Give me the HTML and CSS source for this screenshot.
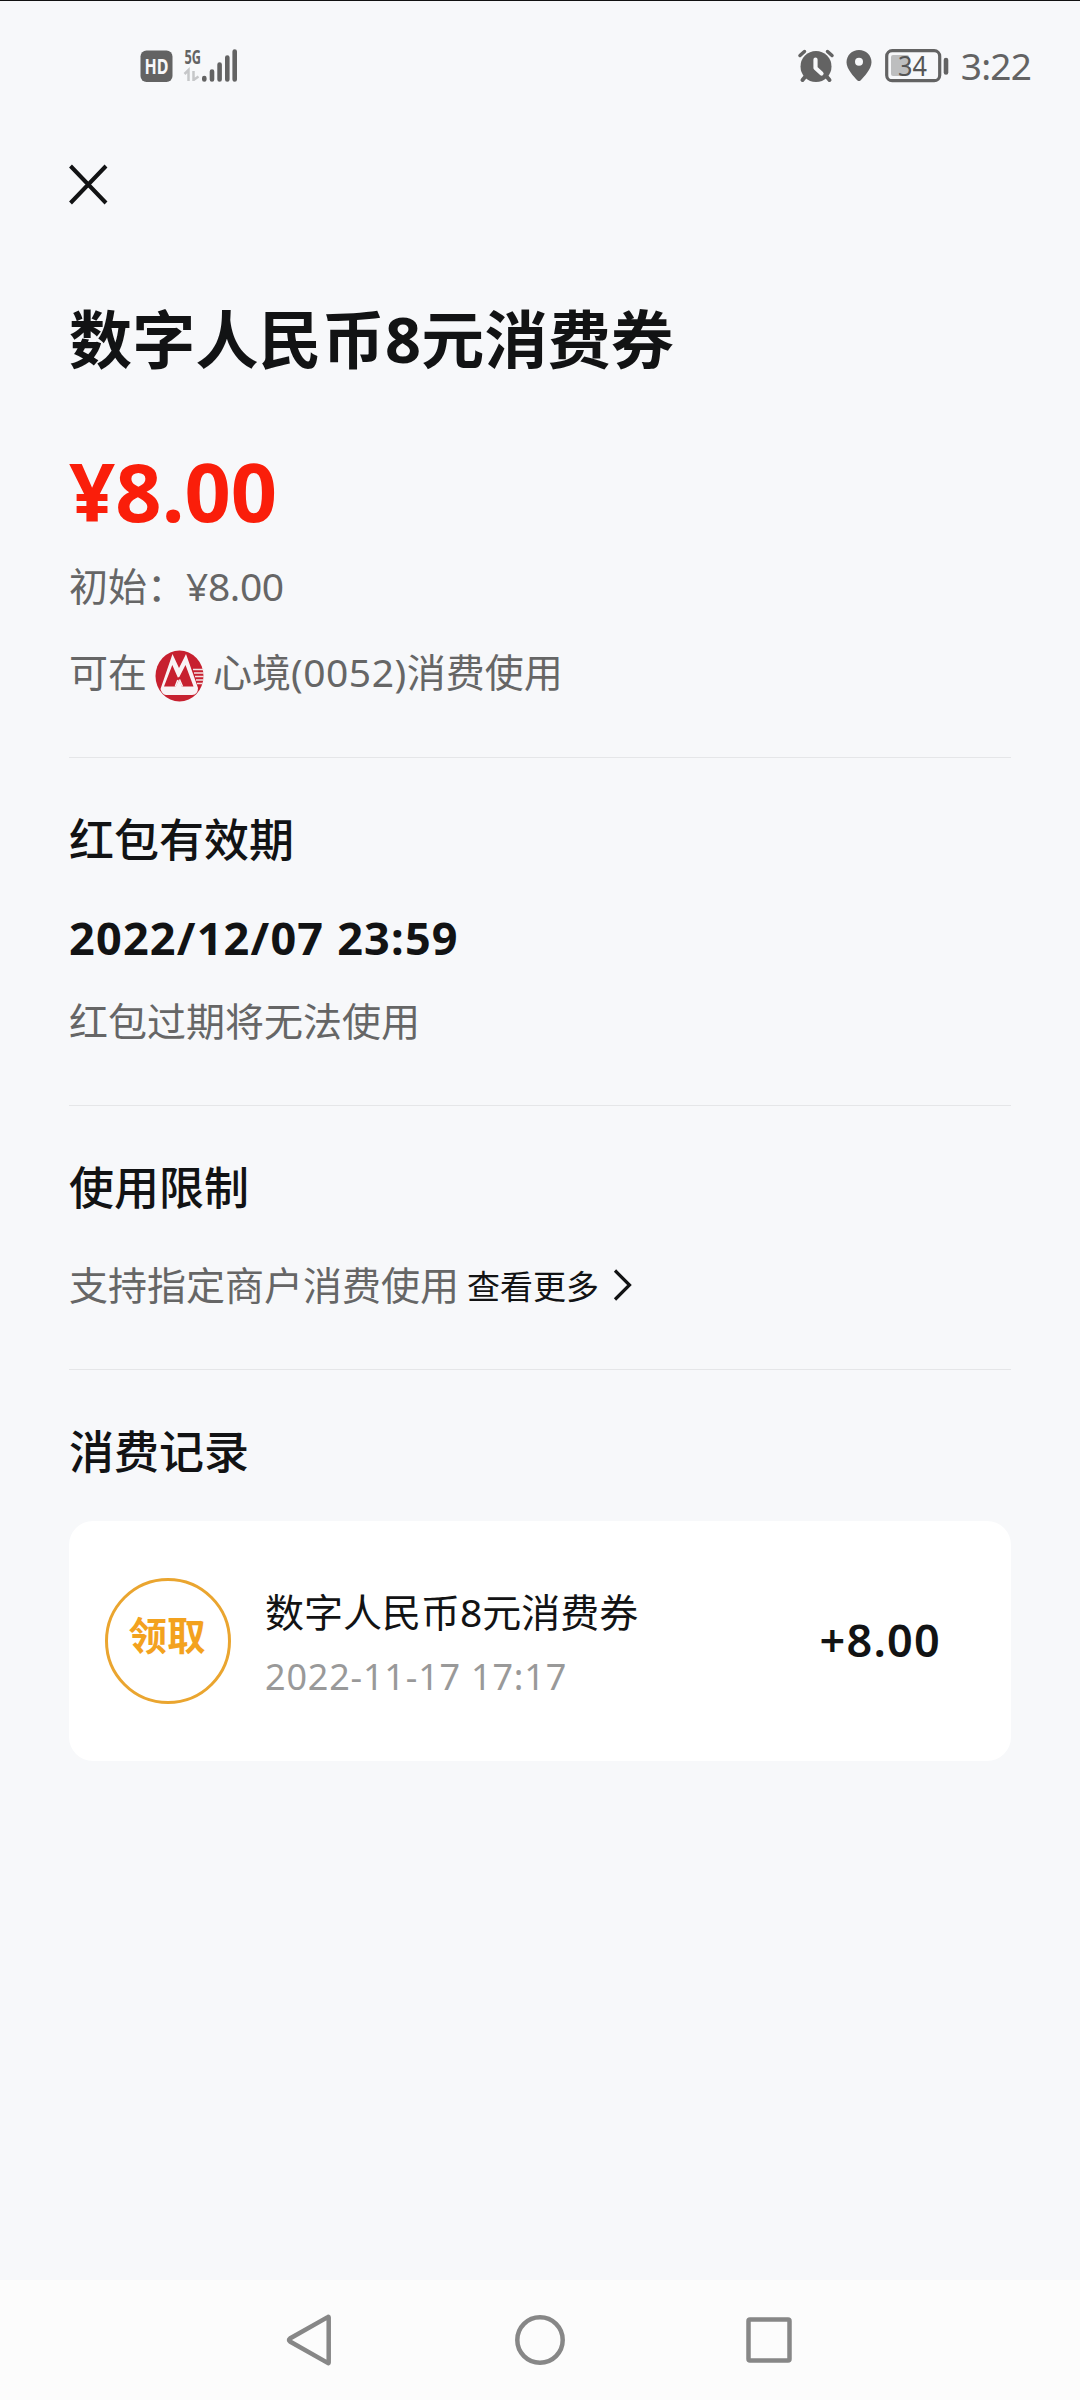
FILE: index.html
```html
<!DOCTYPE html>
<html lang="zh-CN">
<head>
<meta charset="utf-8">
<title>数字人民币8元消费券</title>
<link rel="stylesheet" href="styles.css">
</head>
<body>
<div class="screen">
  <header class="status">
    <svg class="status-left" width="100" height="40" viewBox="0 0 100 40">
      <rect x="0.5" y="4.5" width="32" height="31.5" rx="6" fill="#636363"/>
      <text class="hd" x="16.5" y="28" text-anchor="middle" textLength="24" lengthAdjust="spacingAndGlyphs">HD</text>
      <text class="net" x="44.5" y="17.5" textLength="16.5" lengthAdjust="spacingAndGlyphs">5G</text>
      <path d="M44.500 28l4-4v11M53.500 25v10M53.500 34l5-3.500" fill="none" stroke="#c6c7c9" stroke-width="2.500"/>
      <g stroke="#636363" stroke-width="4.600" stroke-linecap="round">
        <path d="M64.300 32v1.500M72 25.500v8M79.600 18.500v15M87.300 11.500v22M94.700 5.500v28"/>
      </g>
    </svg>
    <div class="status-right">
      <svg width="36" height="36" viewBox="0 0 36 36">
        <g fill="none" stroke="#636363" stroke-linecap="round">
          <path d="M2 7.500l4.500-4M34 7.500l-4.500-4" stroke-width="3.500"/>
          <path d="M7 29l-2.500 3M29 29l2.500 3" stroke-width="4"/>
        </g>
        <circle cx="18" cy="18.500" r="15.500" fill="#636363"/>
        <path d="M17.500 11.500v8.500l6 5.500" fill="none" stroke="#f7f8fa" stroke-width="4.200" stroke-linecap="round" stroke-linejoin="round"/>
      </svg>
      <svg class="pin" width="26" height="34" viewBox="0 0 26 34">
        <path fill-rule="evenodd" fill="#636363" d="M13 1C6 1 .5 6.300.5 13.300.5 20 8 28 11.500 31.500q1.500 1.200 3 0C18 28 25.500 20 25.500 13.300 25.500 6.300 20 1 13 1zM13 8.700a4 4 0 1 1 0 8 4 4 0 0 1 0-8z"/>
      </svg>
      <svg class="battery" width="64" height="36" viewBox="0 0 64 36">
        <rect x="6" y="7" width="18" height="21" rx="2" fill="#bdbebf"/>
        <rect x="1.700" y="2.700" width="53" height="30" rx="5.500" fill="none" stroke="#636363" stroke-width="3.200"/>
        <path d="M61 12v12.500" stroke="#636363" stroke-width="4.600" stroke-linecap="round"/>
        <text class="level" x="27.500" y="27.500" text-anchor="middle" textLength="29" lengthAdjust="spacingAndGlyphs">34</text>
      </svg>
      <span class="time">3:22</span>
    </div>
  </header>

  <main class="page">
    <div class="toolbar">
      <svg width="40" height="40" viewBox="0 0 40 40"><path d="M1.500 2l35.500 37M37 2L1.500 39" stroke="#121314" stroke-width="4"/></svg>
    </div>
    <h1 class="title">数字人民币8元消费券</h1>
    <div class="amount">¥8.00</div>
    <div class="initial">初始：<span class="value">¥8.00</span></div>
    <div class="wallet">
      <span>可在</span>
      <svg class="logo" width="50" height="52" viewBox="0 0 50 52">
        <ellipse cx="24.500" cy="26" rx="24" ry="25.500" fill="#c7202f"/>
        <path d="M5.500 39L17.500 4l6.500 14 7-14 12 34q0 6.500-6 7H11q-4-.5-5.500-6z" fill="#f9f3f5"/>
        <path d="M9 36.500L17.300 15l5.500 12.500L24.300 27l6.200-12 8 21.500H26.800L24 29.500l-3.200 7z" fill="#c7202f"/>
        <path d="M20.300 36.500l2.500-6.500M27.500 36.500l-3-7" stroke="#f9f3f5" stroke-width="1.500"/>
        <path d="M38 19.500h10.500M39 23h9.800M40 26.500h8.800M41 30h7.500M42 33.500h5.500" stroke="#f3dfe2" stroke-width="1.700"/>
      </svg>
      <span>心境<span class="digits">(0052)</span>消费使用</span>
    </div>

    <section class="section">
      <h2 class="heading">红包有效期</h2>
      <div class="expiry">2022/12/07 23:59</div>
      <p class="note">红包过期将无法使用</p>
    </section>

    <section class="section">
      <h2 class="heading">使用限制</h2>
      <p class="note limit">支持指定商户消费使用
        <a class="more">查看更多</a>
        <svg width="20" height="34" viewBox="0 0 20 34"><path d="M2 2.500L16.500 17 2 31.500" fill="none" stroke="#121314" stroke-width="3.200"/></svg>
      </p>
    </section>

    <section class="section">
      <h2 class="heading">消费记录</h2>
      <div class="card">
        <div class="badge">领取</div>
        <div class="record">
          <div class="record-name">数字人民币8元消费券</div>
          <div class="record-time">2022-11-17 17:17</div>
        </div>
        <div class="record-sum">+8.00</div>
      </div>
    </section>
  </main>

  <nav class="navbar">
    <svg width="52" height="52" viewBox="0 0 52 52"><path d="M43.700 3.500v45q0 1-1 .4L5 27.500q-2-1.500 0-3L42.700 3.100q1-.6 1 .4z"/></svg>
    <svg width="52" height="52" viewBox="0 0 52 52"><circle cx="26" cy="26" r="22.700"/></svg>
    <svg width="52" height="52" viewBox="0 0 52 52"><rect x="5.500" y="5.500" width="41" height="41" rx="1.500"/></svg>
  </nav>
</div>
</body>
</html>
```
FILE: styles.css
```css
* { box-sizing: border-box; margin: 0; padding: 0; }

body {
  background: #f7f8fa;
  font-family: "Noto Sans", "Noto Sans CJK SC", sans-serif;
  color: #121314;
}

svg { display: block; flex: none; overflow: visible; }

.screen {
  display: flex;
  flex-direction: column;
  width: 1080px;
  height: 2400px;
  border-top: 1px solid #111;
  overflow: hidden;
}

.status {
  display: flex;
  justify-content: space-between;
  align-items: center;
  height: 129px;
  padding: 0 49px 0 140px;
}
.status-left { font-weight: 700; }
.hd { font-size: 21px; fill: #f7f8fa; }
.net { font-size: 20px; fill: #636363; }
.status-right { display: flex; align-items: center; color: #636363; }
.pin { margin-left: 12px; }
.battery { margin-left: 13px; }
.level { font-size: 27px; fill: #555; }
.time { margin-left: 12px; font-size: 37px; line-height: 40px; letter-spacing: -.8px; }

.page { flex: 1; padding: 0 69px; }

.toolbar { display: flex; align-items: center; height: 108px; }

.title { margin-top: 61px; font-size: 63px; line-height: 80px; font-weight: 700; letter-spacing: .2px; white-space: nowrap; }
.amount { margin-top: 62px; font-size: 81px; line-height: 100px; font-weight: 700; color: #fa1e0a; }

.initial, .wallet, .note { font-size: 39px; color: #666; white-space: nowrap; }
.initial { margin-top: 20px; line-height: 50px; }
.value { letter-spacing: -.4px; }
.wallet { display: flex; align-items: center; height: 52px; margin: 35px 0 59px; line-height: 52px; }
.logo { margin: 8px 8px 0; }
.digits { letter-spacing: .5px; }

.section { border-top: 1px solid #e5e6e8; padding: 52px 0 59px; }
.heading { font-size: 45px; line-height: 60px; font-weight: 500; }
.expiry { margin-top: 38px; font-size: 45px; line-height: 60px; font-weight: 700; letter-spacing: 1.2px; }
.note { margin-top: 28px; line-height: 50px; }
.limit { display: flex; align-items: center; height: 50px; margin-top: 42px; }
.more { margin-left: 8px; margin-right: 14px; padding-top: 3px; font-size: 33px; color: #121314; }

.card {
  display: flex;
  align-items: center;
  height: 240px;
  margin-top: 39px;
  padding: 0 70px 0 36px;
  border-radius: 24px;
  background: #fff;
}
.badge {
  width: 126px;
  height: 126px;
  padding-right: 2px;
  border: 3px solid #eaa52f;
  border-radius: 50%;
  text-align: center;
  font-size: 38.500px;
  font-weight: 700;
  line-height: 109px;
  color: #f3a21e;
}
.record { flex: 1; margin-left: 34px; padding-top: 7px; }
.record-name { font-size: 39px; line-height: 60px; }
.record-time { margin-top: 5px; font-size: 36px; line-height: 60px; letter-spacing: .8px; color: #999; }
.record-sum { padding-bottom: 2px; font-size: 45px; line-height: 60px; font-weight: 600; letter-spacing: 1.2px; }

.navbar {
  display: flex;
  justify-content: space-between;
  align-items: center;
  height: 120px;
  padding: 0 285px;
  background: #fcfcfc;
}
.navbar svg { fill: none; stroke: #878787; stroke-width: 4.500; }
```
